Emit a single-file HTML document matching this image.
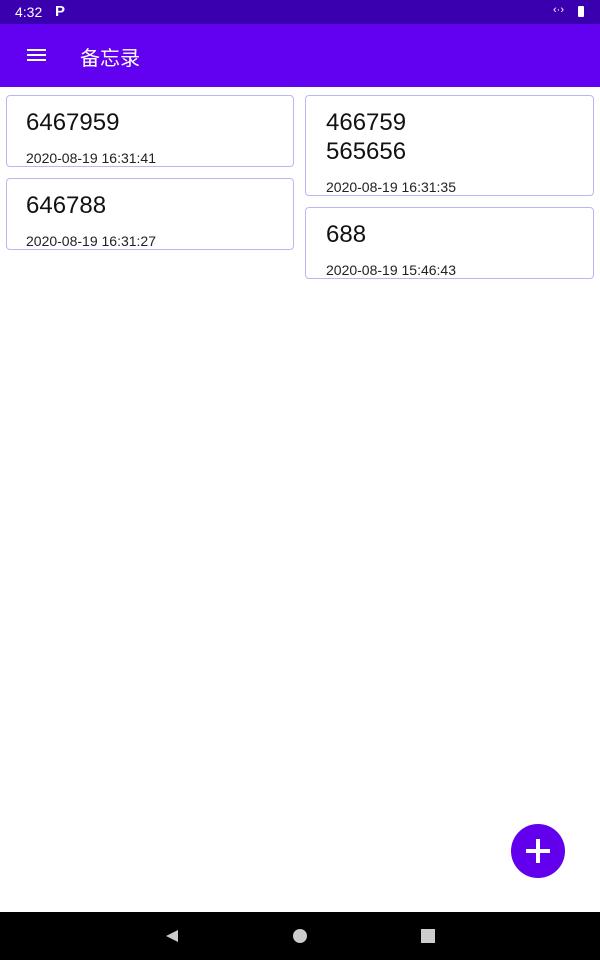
<!DOCTYPE html>
<html><head><style>
body{margin:0;width:600px;height:960px;position:relative;background:#fff;font-family:"Liberation Sans","Noto Sans CJK SC",sans-serif;overflow:hidden}
.sb{position:absolute;top:0;left:0;width:600px;height:24px;background:#3a00b0;color:#fff;font-size:14px}
.ab{position:absolute;top:24px;left:0;width:600px;height:63px;background:#6200f0}
.card{position:absolute;border:1px solid #b8b8f0;border-radius:4px;box-sizing:border-box;background:#fff}
.t{position:absolute;left:19px;font-size:24px;color:#111;line-height:29px}
.d{position:absolute;left:19px;font-size:14px;color:#222}
.nav{position:absolute;top:912px;left:0;width:600px;height:48px;background:#000}
</style></head><body>
<div class="sb"><span style="position:absolute;left:15px;top:4px">4:32</span>
<span style="position:absolute;left:55px;top:3px;font-weight:bold;font-size:15px">P</span>
<span style="position:absolute;left:553px;top:4px;font-size:11px">‹·›</span>
<div style="position:absolute;left:578px;top:6px;width:6px;height:11px;background:#fff;border-radius:1px"></div></div>
<div class="ab">
<div style="position:absolute;left:27px;top:25px;width:19px;height:2px;background:#fff;box-shadow:0 5px 0 #fff,0 10px 0 #fff"></div>
<div style="position:absolute;left:80px;top:18px;color:#fff;font-size:20px">备忘录</div></div>
<div class="card" style="left:6px;top:95px;width:288px;height:72px"><div class="t" style="top:12px">6467959</div><div class="d" style="top:54px">2020-08-19 16:31:41</div></div>
<div class="card" style="left:6px;top:178px;width:288px;height:72px"><div class="t" style="top:12px">646788</div><div class="d" style="top:54px">2020-08-19 16:31:27</div></div>
<div class="card" style="left:305px;top:95px;width:289px;height:101px"><div class="t" style="top:12px;left:20px">466759<br>565656</div><div class="d" style="top:83px;left:20px">2020-08-19 16:31:35</div></div>
<div class="card" style="left:305px;top:207px;width:289px;height:72px"><div class="t" style="top:12px;left:20px">688</div><div class="d" style="top:54px;left:20px">2020-08-19 15:46:43</div></div>
<div style="position:absolute;left:511px;top:824px;width:54px;height:54px;border-radius:50%;background:#6200ee">
<div style="position:absolute;left:15px;top:25px;width:24px;height:4px;background:#fff"></div>
<div style="position:absolute;left:25px;top:15px;width:4px;height:24px;background:#fff"></div></div>
<div class="nav">
<svg width="600" height="48" style="position:absolute;left:0;top:0"><polygon points="178,18 178,30 166,24" fill="#ccc"/><circle cx="300" cy="24" r="7" fill="#ccc"/><rect x="421" y="17" width="14" height="14" fill="#ccc"/></svg></div>
</body></html>
